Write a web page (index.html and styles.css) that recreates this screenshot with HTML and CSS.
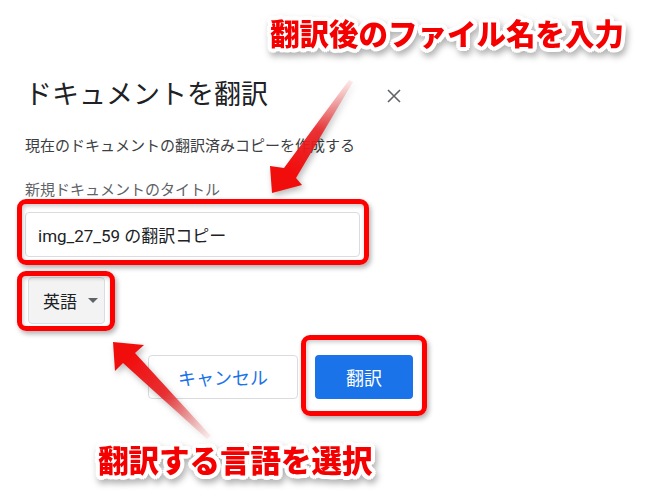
FILE: index.html
```html
<!DOCTYPE html>
<html lang="ja">
<head>
<meta charset="utf-8">
<title>ドキュメントを翻訳</title>
<link rel="stylesheet" href="styles.css">
</head>
<body>
<div class="page">
  <div class="dialog">
    <div class="header">
      <h1 class="title">ドキュメントを翻訳</h1>
      <svg class="close" width="14" height="14" viewBox="0 0 14 14" aria-label="閉じる">
        <path d="M1 1 L13 13 M13 1 L1 13" stroke="#5f6368" stroke-width="1.6" fill="none"/>
      </svg>
    </div>
    <p class="subtitle">現在のドキュメントの翻訳済みコピーを作成する</p>
    <p class="label">新規ドキュメントのタイトル</p>
    <div class="input">img_27_59 の翻訳コピー</div>
    <div class="lang">
      <span>英語</span>
      <span class="caret"></span>
    </div>
    <div class="actions">
      <div class="btn cancel">キャンセル</div>
      <div class="btn primary">翻訳</div>
    </div>
  </div>

  <svg class="arrows" width="667" height="503" viewBox="0 0 667 503">
    <defs>
      <linearGradient id="g1" gradientUnits="userSpaceOnUse" x1="351" y1="81" x2="290" y2="170">
        <stop offset="0" stop-color="#f07070" stop-opacity="0.15"/>
        <stop offset="0.55" stop-color="#ea1f22" stop-opacity="0.9"/>
        <stop offset="1" stop-color="#f20d0d"/>
      </linearGradient>
      <linearGradient id="g2" gradientUnits="userSpaceOnUse" x1="209" y1="438" x2="130" y2="358">
        <stop offset="0" stop-color="#f07070" stop-opacity="0.1"/>
        <stop offset="0.55" stop-color="#ea1f22" stop-opacity="0.9"/>
        <stop offset="1" stop-color="#f20d0d"/>
      </linearGradient>
    </defs>
    <polygon class="arrow" fill="url(#g1)" points="349,80 284,168 270,166 272,193 302,185 296,178 353,82"/>
    <polygon class="arrow" fill="url(#g2)" points="113,342 144,345 135,353 211,436 207,439 123,363 115,371"/>
  </svg>

  <div class="mark mark-input"></div>
  <div class="mark mark-lang"></div>
  <div class="mark mark-btn"></div>

  <div class="note note-top">翻訳後のファイル名を入力</div>
  <div class="note note-bottom">翻訳する言語を選択</div>
</div>
</body>
</html>
```

FILE: styles.css
```css
* { box-sizing: border-box; }

html, body {
  margin: 0;
  padding: 0;
  background: #ffffff;
}

body {
  font-family: Roboto, "Noto Sans CJK JP", sans-serif;
  color: #202124;
}

.page {
  position: relative;
  width: 667px;
  height: 503px;
  overflow: hidden;
}

.dialog {
  padding: 73px 0 0 25px;
  width: 420px;
}

.header {
  display: flex;
  align-items: center;
  width: 376px;
}

.title {
  margin: 0;
  font-family: "Noto Sans CJK JP", sans-serif;
  font-weight: 400;
  font-size: 27px;
  line-height: 40px;
  color: #202124;
}

.close {
  margin-left: auto;
  margin-top: 6px;
}

.subtitle {
  margin: 21px 0 0;
  font-family: "Noto Sans CJK JP", sans-serif;
  font-size: 15px;
  line-height: 22px;
  color: #3c4043;
}

.label {
  margin: 22px 0 0;
  font-family: "Noto Sans CJK JP", sans-serif;
  font-size: 15px;
  line-height: 22px;
  color: #5f6368;
}

.input {
  margin-top: 12px;
  width: 335px;
  height: 45px;
  border: 1px solid #dadce0;
  border-radius: 4px;
  background: #fff;
  padding-left: 12px;
  display: flex;
  align-items: center;
  font-size: 17px;
  color: #202124;
}

.lang {
  margin: 20px 0 0 3px;
  width: 77px;
  height: 47px;
  border: 1px solid #dadce0;
  border-radius: 4px;
  background: #f3f3f3;
  display: flex;
  align-items: center;
  padding-left: 14px;
  gap: 11px;
  font-family: "Noto Sans CJK JP", sans-serif;
  font-size: 17px;
  color: #202124;
}

.caret {
  width: 0;
  height: 0;
  border-left: 5px solid transparent;
  border-right: 5px solid transparent;
  border-top: 5px solid #5f6368;
}

.actions {
  display: flex;
  gap: 17px;
  margin: 31px 0 0 123px;
}

.btn {
  height: 44px;
  border-radius: 4px;
  display: flex;
  align-items: center;
  justify-content: center;
  font-family: "Noto Sans CJK JP", sans-serif;
  font-size: 18px;
}

.cancel {
  width: 150px;
  border: 1px solid #dadce0;
  color: #1a73e8;
  background: #fff;
}

.primary {
  width: 98px;
  background: #1a73e8;
  color: #fff;
}

/* annotations overlay */
.arrows {
  position: absolute;
  left: 0;
  top: 0;
  pointer-events: none;
}

.arrow {
  filter: drop-shadow(2px 3px 3px rgba(0, 0, 0, 0.28));
}

.mark {
  position: absolute;
  border: 5px solid #ff0000;
  border-radius: 9px;
  box-shadow: 2px 3px 5px rgba(0, 0, 0, 0.3), inset 1px 2px 4px rgba(0, 0, 0, 0.22);
}

.mark-input { left: 17px; top: 199px; width: 352px; height: 66px; }
.mark-lang { left: 17px; top: 271px; width: 98px; height: 60px; }
.mark-btn { left: 301px; top: 335px; width: 126px; height: 81px; }

.note {
  position: absolute;
  font-family: "Noto Sans CJK JP", sans-serif;
  font-weight: 900;
  color: #f50000;
  white-space: nowrap;
  text-shadow:
    3px 0 0 #fff, -3px 0 0 #fff, 0 3px 0 #fff, 0 -3px 0 #fff,
    2px 2px 0 #fff, -2px 2px 0 #fff, 2px -2px 0 #fff, -2px -2px 0 #fff,
    4px 1px 0 #fff, -4px 1px 0 #fff, 1px 4px 0 #fff, 1px -4px 0 #fff,
    4px -1px 0 #fff, -4px -1px 0 #fff, -1px 4px 0 #fff, -1px -4px 0 #fff,
    3px 3px 0 #fff, -3px 3px 0 #fff, 3px -3px 0 #fff, -3px -3px 0 #fff;
  filter: drop-shadow(2px 4px 3px rgba(0, 0, 0, 0.3));
}

.note-top {
  left: 270px;
  top: 17px;
  font-size: 29.5px;
  line-height: 30px;
}

.note-bottom {
  left: 98px;
  top: 444px;
  font-size: 30.5px;
  line-height: 31px;
}
```
